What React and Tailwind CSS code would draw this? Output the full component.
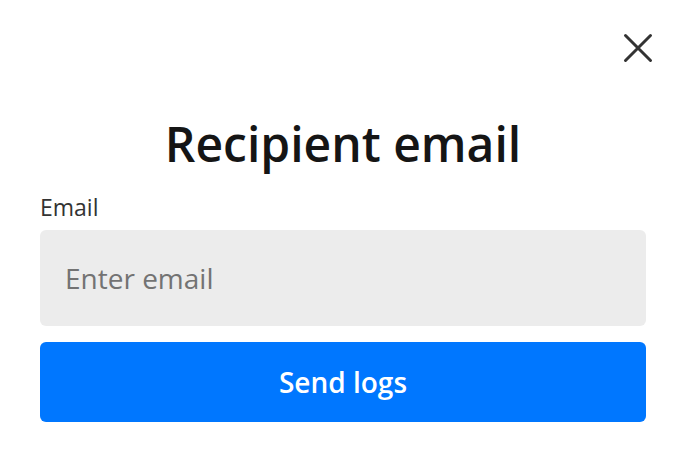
export default function App() {
  return (
    <main
      className="relative h-[470px] w-[686px] bg-white px-[40px]"
      style={{ fontFamily: '"Open Sans", sans-serif' }}
    >
      <button type="button" aria-label="Close" className="absolute right-[31px] top-[31px] flex h-[34px] w-[34px] items-center justify-center text-[#333333]">
        <svg width="34" height="34" viewBox="0 0 34 34" fill="none" stroke="currentColor" strokeWidth="3" strokeLinecap="round">
          <path d="M4.5 4.5 L29.5 29.5 M29.5 4.5 L4.5 29.5" />
        </svg>
      </button>

      <div className="flex flex-col pt-[112px]">
        <h1 className="text-center text-[48px] font-semibold leading-[64px] text-[#151515]">Recipient email</h1>
        <label className="mt-[16px] text-[23px] leading-[30px] text-[#333333]">Email</label>
        <input
          type="email"
          placeholder="Enter email"
          className="mt-[8px] h-[96px] w-full rounded-[6px] bg-[#ececec] px-[25px] text-[28px] text-[#333333] outline-none placeholder:text-[#737373]"
        />
        <button type="button" className="mt-[16px] h-[80px] w-full rounded-[6px] bg-[#0077ff] text-[28px] font-semibold text-white">
          Send logs
        </button>
      </div>
    </main>
  );
}
